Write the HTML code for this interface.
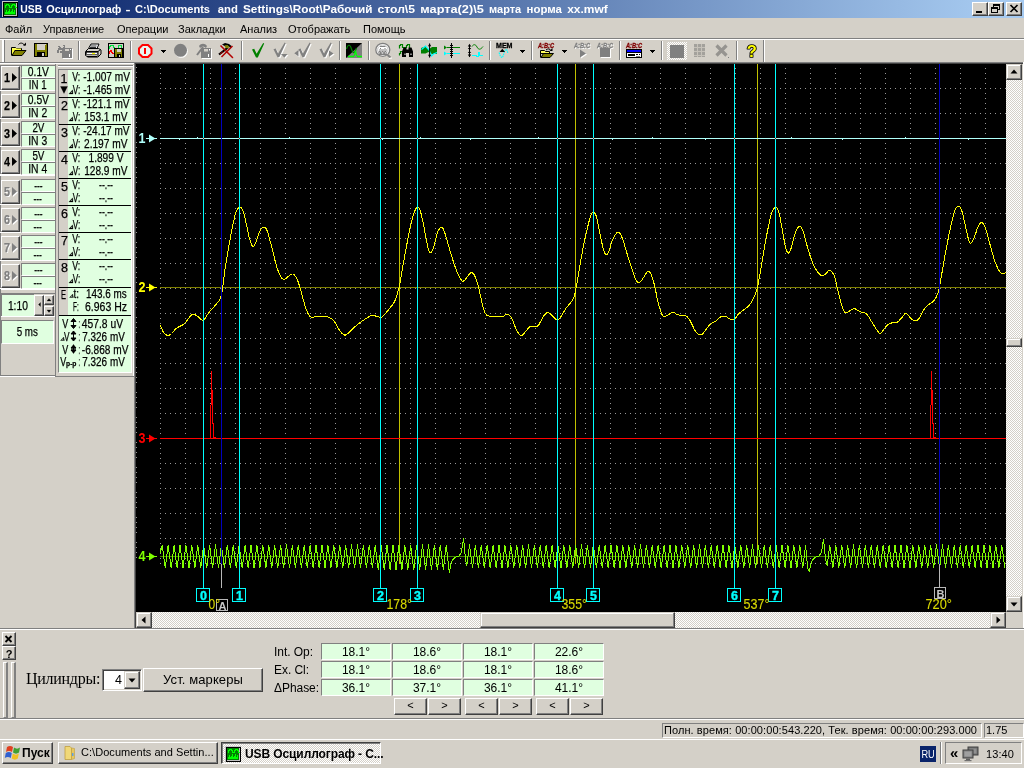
<!DOCTYPE html>
<html lang="ru">
<head>
<meta charset="utf-8">
<title>USB Осциллограф</title>
<style>
*{box-sizing:border-box;margin:0;padding:0}
html,body{width:1024px;height:768px;overflow:hidden;background:#d4d0c8}
body{position:relative;font-family:"Liberation Sans","DejaVu Sans",sans-serif;font-size:11px;color:#000}
.abs{position:absolute}
.t{position:absolute;white-space:nowrap;line-height:1}
.raised{position:absolute;background:#d4d0c8;border:1px solid;border-color:#fff #404040 #404040 #fff;box-shadow:inset -1px -1px 0 #808080, inset 1px 1px 0 #d4d0c8}
.raised2{position:absolute;background:#d4d0c8;border:1px solid;border-color:#d4d0c8 #404040 #404040 #d4d0c8;box-shadow:inset -1px -1px 0 #808080, inset 1px 1px 0 #fff}
.sunken{position:absolute;border:1px solid;border-color:#808080 #fff #fff #808080}
.sunken2{position:absolute;border:1px solid;border-color:#808080 #fff #fff #808080;box-shadow:inset 1px 1px 0 #404040, inset -1px -1px 0 #d4d0c8}
.gf{position:absolute;background:#e0ffe0;border:1px solid;border-color:#808080 #fff #fff #808080;text-align:center;white-space:nowrap;overflow:hidden}
.chk{background-color:#eae8e4;background-image:repeating-conic-gradient(#fff 0 25%,#d4d0c8 0 50%);background-size:2px 2px}
.sep{position:absolute;width:2px;border-left:1px solid #808080;border-right:1px solid #fff}
svg{position:absolute;overflow:visible;will-change:transform}
.t,.gf{will-change:transform}
</style>
</head>
<body>
<!-- title bar -->
<div class="abs" style="left:0;top:0;width:1024px;height:18px;background:linear-gradient(90deg,#0a246a 0%,#0a246a 2%,#a6caf0 97%,#a6caf0 100%)"></div>
<svg style="left:2px;top:1px" width="16" height="16" viewBox="0 0 16 16" shape-rendering="crispEdges">
 <rect x="0" y="0" width="16" height="16" fill="#c8c8c8"/><rect x="1" y="1" width="15" height="15" fill="#000"/>
 <rect x="2" y="2" width="13" height="13" fill="#c0c0c0"/><rect x="2" y="2" width="12" height="12" fill="#008000"/>
 <path d="M2.500 6.500h1v-2h1v-1h2v1h1v2h2v-2h1v-1h2v1h1v2h1" fill="none" stroke="#00ff00"/><path d="M3 13V11h1V9h1v2h1V10h1V8h1v3h1V10h1V8h1v3h1V9h1v4z" fill="#00ff00"/>
</svg>
<svg style="left:0;top:0" width="640" height="18" viewBox="0 0 640 18" font-family="Liberation Sans,sans-serif" font-size="11.500" font-weight="bold" fill="#fff"><text x="20.3" y="13" textLength="21.9" lengthAdjust="spacingAndGlyphs">USB</text><text x="46.3" y="13" textLength="75" lengthAdjust="spacingAndGlyphs">Осциллограф</text><text x="125.6" y="13" textLength="5" lengthAdjust="spacingAndGlyphs">-</text><text x="135" y="13" textLength="75" lengthAdjust="spacingAndGlyphs">C:\Documents</text><text x="217.8" y="13" textLength="20.2" lengthAdjust="spacingAndGlyphs">and</text><text x="243" y="13" textLength="129.5" lengthAdjust="spacingAndGlyphs">Settings\Root\Рабочий</text><text x="377.5" y="13" textLength="37.5" lengthAdjust="spacingAndGlyphs">стол\5</text><text x="420.3" y="13" textLength="63.5" lengthAdjust="spacingAndGlyphs">марта(2)\5</text><text x="489" y="13" textLength="32.25" lengthAdjust="spacingAndGlyphs">марта</text><text x="526.5" y="13" textLength="35.4" lengthAdjust="spacingAndGlyphs">норма</text><text x="567.2" y="13" textLength="40.6" lengthAdjust="spacingAndGlyphs">хх.mwf</text></svg>
<div class="raised" style="left:972px;top:2px;width:16px;height:14px"></div>
<div class="abs" style="left:976px;top:11px;width:6px;height:2px;background:#000"></div>
<div class="raised" style="left:988px;top:2px;width:16px;height:14px"></div>
<svg style="left:991px;top:4px" width="10" height="10" viewBox="0 0 10 10" shape-rendering="crispEdges"><path d="M2.5 2.5V1h6v4.5H7" fill="none" stroke="#000" stroke-width="1"/><rect x="2" y="0" width="7" height="2" fill="#000"/><rect x="0.5" y="4.500" width="6" height="4" fill="none" stroke="#000"/><rect x="0" y="3" width="7" height="2" fill="#000"/></svg>
<div class="raised" style="left:1006px;top:2px;width:16px;height:14px"></div>
<svg style="left:1010px;top:5px" width="8" height="7" viewBox="0 0 8 7"><path d="M0.5 0L7.500 7M7.500 0L0.500 7" stroke="#000" stroke-width="1.700"/></svg>
<!-- menu -->
<div class="t" style="left:5px;top:24px">Файл</div>
<div class="t" style="left:43px;top:24px">Управление</div>
<div class="t" style="left:117px;top:24px">Операции</div>
<div class="t" style="left:178px;top:24px">Закладки</div>
<div class="t" style="left:240px;top:24px">Анализ</div>
<div class="t" style="left:288px;top:24px">Отображать</div>
<div class="t" style="left:363px;top:24px">Помощь</div>
<!-- toolbar frame -->
<div class="abs" style="left:0;top:38px;width:1024px;height:1px;background:#808080"></div>
<div class="abs" style="left:0;top:39px;width:1024px;height:1px;background:#fff"></div>
<div class="abs" style="left:2px;top:40px;width:3px;height:22px;border-left:2px solid #fff;border-right:1px solid #808080"></div>
<!-- toolbar icons -->
<svg style="left:0;top:38px" width="1024" height="26" viewBox="0 38 1024 26">
<g shape-rendering="crispEdges">
 <!-- separators -->
 <g fill="#808080"><rect x="78" y="41" width="1" height="19"/><rect x="130" y="41" width="1" height="19"/><rect x="241" y="41" width="1" height="19"/><rect x="339" y="41" width="1" height="19"/><rect x="368" y="41" width="1" height="19"/><rect x="489" y="41" width="1" height="19"/><rect x="531" y="41" width="1" height="19"/><rect x="619" y="41" width="1" height="19"/><rect x="661" y="41" width="1" height="19"/><rect x="736" y="41" width="1" height="19"/><rect x="763" y="40" width="1" height="22"/></g>
 <g fill="#ffffff"><rect x="79" y="41" width="1" height="19"/><rect x="131" y="41" width="1" height="19"/><rect x="242" y="41" width="1" height="19"/><rect x="340" y="41" width="1" height="19"/><rect x="369" y="41" width="1" height="19"/><rect x="490" y="41" width="1" height="19"/><rect x="532" y="41" width="1" height="19"/><rect x="620" y="41" width="1" height="19"/><rect x="662" y="41" width="1" height="19"/><rect x="737" y="41" width="1" height="19"/><rect x="764" y="40" width="1" height="22"/></g>
 <!-- dropdown arrows -->
 <g fill="#000"><path d="M161 50h5l-2.500 3z"/><path d="M520 50h5l-2.500 3z"/><path d="M562 50h5l-2.500 3z"/><path d="M650 50h5l-2.500 3z"/></g>
</g>
<!-- open -->
<g transform="translate(11,42)">
 <path d="M7.500 2.500C9 0.500 12 0.500 13.500 3.500" fill="none" stroke="#000" stroke-width="1"/><path d="M12 3.500h3v-3z" fill="#000"/>
 <path d="M0.500 5.500h4l1 1h5v2h-10z" fill="#ffff80" stroke="#000"/><path d="M0.500 6v7.500" stroke="#000"/>
 <path d="M1 6.500h9v2h-6.500l-2.500 4.500z" fill="#ffff40"/>
 <path d="M1 13.500l3-5h11l-4 5z" fill="#808000" stroke="#000" stroke-linejoin="miter"/>
</g>
<!-- save -->
<g transform="translate(34,43)" shape-rendering="crispEdges">
 <rect x="0" y="0" width="14" height="14" fill="#000"/><rect x="1" y="1" width="12" height="12" fill="#808000"/>
 <rect x="3" y="1" width="8" height="6" fill="#d4d0c8"/><rect x="11" y="1" width="1" height="1" fill="#d4d0c8"/>
 <rect x="3" y="9" width="8" height="4" fill="#000"/><rect x="8" y="10" width="2" height="3" fill="#d4d0c8"/>
</g>
<!-- gray saveas -->
<g transform="translate(57,45)" shape-rendering="crispEdges">
 <rect x="6" y="4" width="10" height="10" fill="#fff"/><rect x="5" y="3" width="10" height="10" fill="#808080"/>
 <rect x="8" y="4" width="4" height="2" fill="#d4d0c8"/><rect x="12" y="9" width="1" height="3" fill="#fff"/><rect x="13" y="4" width="1" height="1" fill="#fff"/>
 <path d="M1 1h1v1h1v1h3v-1h1v-1h1M6 0h1v3" fill="none" stroke="#808080"/><rect x="1" y="3" width="4" height="2" fill="#808080"/><rect x="0" y="5" width="2" height="3" fill="#808080"/><rect x="3" y="6" width="2" height="2" fill="#808080"/>
</g>
<!-- printer -->
<g transform="translate(85,43)">
 <path d="M3.500 5.500l2.500-4.500h8l-2 4.500" fill="#fff" stroke="#000"/><path d="M5.500 3h6M5 4.500h6" stroke="#000" stroke-width="0.800"/>
 <path d="M0.500 8.500l3-3h10l2.500 1.500v4l-3 3h-10l-2.500-1.500z" fill="#d4d0c8" stroke="#000"/>
 <path d="M1 8.500h12l2.500-2M13 8.500v5" fill="none" stroke="#000"/>
 <rect x="1.500" y="9.500" width="11" height="2" fill="#fff" stroke="#000" stroke-width="0.600"/><rect x="7" y="10" width="3" height="1.200" fill="#ffff00"/>
 <path d="M2 13.500h10" stroke="#000" stroke-width="1.200"/>
</g>
<!-- graph save -->
<g transform="translate(108,43)" shape-rendering="crispEdges">
 <rect x="0.500" y="0.500" width="15" height="14" fill="#d4d0c8" stroke="#000"/>
 <path d="M1.500 5.500v-2h1v-1h3v2h1M10.500 4.500v-2h3v2" fill="none" stroke="#00e040"/>
 <path d="M1.500 10.500v-2h1v-1h1v2h1v1h1" fill="none" stroke="#ff0000"/>
 <rect x="6" y="5" width="9" height="10" fill="#000"/><rect x="7" y="6" width="7" height="8" fill="#808000"/>
 <rect x="9" y="6" width="4" height="3" fill="#d4d0c8"/><rect x="9" y="11" width="4" height="3" fill="#000"/><rect x="11" y="12" width="1" height="2" fill="#d4d0c8"/>
</g>
<!-- stop -->
<g transform="translate(138,44)">
 <path d="M4.500 1h5.500l3.500 3.500v5l-3.500 3.500h-5.500l-3.500-3.500v-5z" fill="#e8f4f0" stroke="#ff0000" stroke-width="2"/>
 <rect x="6" y="4" width="2" height="6" fill="#ff0000"/>
</g>
<!-- gray circle -->
<circle cx="181.300" cy="51.300" r="6.500" fill="#fff"/><circle cx="180.500" cy="50.300" r="6.500" fill="#808080"/>
<!-- gray hammer floppy -->
<g transform="translate(196,43)">
 <rect x="6" y="6" width="10" height="10" fill="#fff"/><rect x="5" y="5" width="10" height="10" fill="#808080"/>
 <rect x="8" y="6" width="4" height="2.500" fill="#d4d0c8"/><rect x="12" y="11" width="1" height="3" fill="#fff"/><rect x="13" y="6" width="1" height="1.500" fill="#fff"/>
 <path d="M1 12l6-8" stroke="#808080" stroke-width="2"/><path d="M3 3c2-3 6-3 8 0l-1 2c-2-2-4-2-6 0z" fill="#808080"/>
</g>
<!-- hammer red X -->
<g transform="translate(218,43)">
 <path d="M1 11.500l9-7" stroke="#000" stroke-width="2.200"/><path d="M2 11l3-2.300" stroke="#800000" stroke-width="1.200"/>
 <path d="M4 1.500l3-1.500 4 1 2.500 2-1 2-3-2.500-3 0.500z" fill="#000"/><path d="M6.500 2.500l3-0.500 2 2-2 1.500-2.500-1z" fill="#808000"/>
 <path d="M2.500 2.500l12 12M14.500 3l-11 11" stroke="#b00000" stroke-width="1.500"/>
 <rect x="14" y="14" width="1.200" height="1.200" fill="#c00000"/>
</g>
<!-- checks -->
<path d="M252.0 49.6 L254.2 48.8 L256.6 53.8 L263.2 43.0 L264.2 43.6 L257.8 57.6 L256.0 57.6z" fill="#008000"/>
<path d="M274.5 50.2 L276.7 49.4 L279.1 54.4 L285.7 43.6 L286.7 44.2 L280.3 58.2 L278.5 58.2z" fill="#fff"/><path d="M273.5 49.2 L275.7 48.4 L278.1 53.4 L284.7 42.6 L285.7 43.2 L279.3 57.2 L277.5 57.2z" fill="#808080"/><path d="M282 55h6.500l-3.200 3.800z" fill="#fff"/><path d="M281 54h6.500l-3.200 3.800z" fill="#808080"/>
<path d="M299.4 50.2 L301.6 49.4 L304.0 54.4 L310.6 43.6 L311.6 44.2 L305.2 58.2 L303.4 58.2z" fill="#fff"/><path d="M298.4 49.2 L300.6 48.4 L303.0 53.4 L309.6 42.6 L310.6 43.2 L304.2 57.2 L302.4 57.2z" fill="#808080"/><path d="M299.500 51v6.400l-4.200-3.200z" fill="#fff"/><path d="M298.500 50v6.400l-4.200-3.200z" fill="#808080"/>
<path d="M320.5 50.2 L322.7 49.4 L325.1 54.4 L331.7 43.6 L332.7 44.2 L326.3 58.2 L324.5 58.2z" fill="#fff"/><path d="M319.5 49.2 L321.7 48.4 L324.1 53.4 L330.7 42.6 L331.7 43.2 L325.3 57.2 L323.5 57.2z" fill="#808080"/><path d="M330 51.400v6.400l4.600-3.200z" fill="#fff"/><path d="M329 50.400v6.400l4.600-3.200z" fill="#808080"/>
<!-- black/gray square -->
<g transform="translate(346,43)">
 <rect x="0" y="0" width="16" height="15" fill="#808080" shape-rendering="crispEdges"/><path d="M0 0h16l-16 15z" fill="#000"/>
 <path d="M0.500 6c1.500-5 3.500-5 5 0s3 5 5-1" fill="none" stroke="#008000" stroke-width="1.200"/>
 <path d="M2 13.500h5.500c1.500-1 1.500-3 2-6c0.500 3 0.500 5 2 6h4.500" fill="none" stroke="#00ff00" stroke-width="1.300"/>
</g>
<!-- magnifier -->
<g transform="translate(375,43)">
 <ellipse cx="7.800" cy="6.800" rx="7" ry="6.500" fill="#fff" stroke="#808080" stroke-width="1.300"/><ellipse cx="7.800" cy="6.800" rx="5.200" ry="4.700" fill="none" stroke="#c0c0c0" stroke-width="0.900"/>
 <path d="M4 11v-2.500h1.500v2.500h1.300v-2.500h1.500v2.500h1.300v-2.500h1.500v2.500M3.500 11.500h9M5 3.500h5.500M5 5.500h1M9.500 5.500h1M4 7h8" fill="none" stroke="#808080" stroke-width="1"/>
 <path d="M12.500 12l3 2.500" stroke="#808080" stroke-width="2"/><path d="M14 15.500l3-0.500" stroke="#fff"/>
</g>
<!-- binoculars -->
<g transform="translate(399,44)">
 <path d="M0.500 4.500v-3h1v-1h2v3h4v-2h1v-1h2v4M0.500 11.500v-2h1v-2h2v3" fill="none" stroke="#008000" stroke-width="1.200"/>
 <path d="M4.500 3.500h3v2h2v-2h3l1.500 4v5.500h-4v-4h-3v4h-4v-5.500z" fill="#000"/>
 <rect x="5.500" y="9.500" width="1" height="1.500" fill="#fff"/><rect x="11.500" y="9.500" width="1" height="1.500" fill="#fff"/><rect x="5" y="12" width="2" height="1" fill="#000"/>
</g>
<!-- green wave arrows -->
<g transform="translate(421,43)">
 <path d="M0 5l4-1.500 3.500 3 3.500-2.500h5v7h-5l-3.500-2-3 1.500h-4.500z" fill="#008000"/>
 <path d="M0.500 6.500l4-3.500 3.500 4 2.500 6 2-2 3.500-1.500" fill="none" stroke="#00ffff" stroke-width="1.200"/>
 <path d="M8.600 0.500v14" stroke="#000" stroke-width="1"/><path d="M7 3.200l1.600-2.700 1.600 2.700zM7 11.800l1.600 2.700 1.600-2.700z" fill="#000"/>
</g>
<!-- two lines w arrow -->
<g transform="translate(444,43)" shape-rendering="crispEdges">
 <rect x="3" y="4" width="13" height="1" fill="#008000"/><path d="M0 2.500l3 2-3 2z" fill="#008000" shape-rendering="auto"/>
 <rect x="3" y="10" width="13" height="1" fill="#00ffff"/><path d="M0 8.500l3 2-3 2z" fill="#00ffff" shape-rendering="auto"/>
 <rect x="7" y="0" width="1" height="15" fill="#000"/><rect x="6" y="2" width="3" height="1" fill="#000"/><rect x="6" y="4" width="3" height="1" fill="#000"/><rect x="6" y="6" width="3" height="1" fill="#000"/><rect x="6" y="8" width="3" height="1" fill="#000"/><rect x="6" y="10" width="3" height="1" fill="#000"/><rect x="6" y="12" width="3" height="1" fill="#000"/>
</g>
<!-- arrows + waves -->
<g transform="translate(467,43)">
 <path d="M2.500 1.500v12" stroke="#000" stroke-width="1" shape-rendering="crispEdges"/><path d="M0.800 3.500l1.700-2.800 1.700 2.800zM0.800 5l1.700 2 1.700-2zM0.800 10l1.700-2 1.700 2zM0.800 11.500l1.700 2.800 1.700-2.800z" fill="#000"/>
 <path d="M5 3.500c1.500-2.500 3.500-2.500 5 0.500s3.500 3 6-0.500" fill="none" stroke="#008000" stroke-width="1"/>
 <path d="M5 12.500h4v1h2v-4h1v2.500h4" fill="none" stroke="#00ffff" stroke-width="1" shape-rendering="crispEdges"/>
</g>
<!-- MEM -->
<text x="496" y="48" font-family="Liberation Sans,sans-serif" font-size="7.500" font-weight="bold" fill="#000" stroke="#000" stroke-width="0.300" textLength="16.500" lengthAdjust="spacingAndGlyphs">MEM</text>
<path d="M499 52.500c1 3 2 5 3 5s2-5 3-7 2-1 3 3" fill="none" stroke="#00ffff" stroke-width="1.100" stroke-dasharray="1.500 0.700"/>
<path d="M499.500 52l2.800-3.200 2.800 3.200z" fill="#000"/>
<!-- A:B:C folder -->
<text x="538" y="48" font-family="Liberation Sans,sans-serif" font-size="7" font-weight="bold" font-style="italic" fill="#800000" stroke="#800000" stroke-width="0.350" textLength="16" lengthAdjust="spacingAndGlyphs">A:B:C</text>
<g transform="translate(540,48)">
 <path d="M6 2c1.500-1.500 4-1.500 5 0.500" fill="none" stroke="#000"/><path d="M9.500 3h3v-3z" fill="#000"/>
 <path d="M0.500 2.500h4l1 1h4v2h-9z" fill="#ffff60" stroke="#000"/><path d="M0.500 3v6.500" stroke="#000"/>
 <path d="M1 9.500l2.500-4h10l-3.500 4z" fill="#808000" stroke="#000"/>
</g>
<!-- gray A:B:C play -->
<text x="575" y="49" font-family="Liberation Sans,sans-serif" font-size="7" font-weight="bold" font-style="italic" fill="#fff" textLength="16" lengthAdjust="spacingAndGlyphs">A:B:C</text>
<text x="574" y="48" font-family="Liberation Sans,sans-serif" font-size="7" font-weight="bold" font-style="italic" fill="#808080" stroke="#808080" stroke-width="0.300" textLength="16" lengthAdjust="spacingAndGlyphs">A:B:C</text>
<path d="M581 50.500v8l6-4z" fill="#fff"/><path d="M580 49.500v8l6-4z" fill="#808080"/>
<text x="598" y="49" font-family="Liberation Sans,sans-serif" font-size="7" font-weight="bold" font-style="italic" fill="#fff" textLength="16" lengthAdjust="spacingAndGlyphs">A:B:C</text>
<text x="597" y="48" font-family="Liberation Sans,sans-serif" font-size="7" font-weight="bold" font-style="italic" fill="#808080" stroke="#808080" stroke-width="0.300" textLength="16" lengthAdjust="spacingAndGlyphs">A:B:C</text>
<rect x="601" y="49" width="10" height="9" fill="#fff"/><rect x="600" y="48" width="10" height="9" fill="#808080"/>
<!-- A:B:C device -->
<text x="626" y="48" font-family="Liberation Sans,sans-serif" font-size="7" font-weight="bold" font-style="italic" fill="#800000" stroke="#800000" stroke-width="0.350" textLength="16" lengthAdjust="spacingAndGlyphs">A:B:C</text>
<g shape-rendering="crispEdges"><rect x="626" y="49" width="16" height="9" fill="#000"/><rect x="627" y="50" width="14" height="2" fill="#0000ff"/><rect x="627" y="53" width="14" height="4" fill="#fff"/><rect x="628" y="54" width="7" height="2" fill="#000"/><rect x="636" y="54" width="2" height="1" fill="#000"/><rect x="639" y="54" width="1" height="1" fill="#000"/><rect x="636" y="56" width="4" height="1" fill="#808080"/></g>
<!-- pressed gray square -->
<defs><pattern id="dth" width="2" height="2" patternUnits="userSpaceOnUse"><rect width="2" height="2" fill="#d4d0c8"/><rect width="1" height="1" fill="#fff"/><rect x="1" y="1" width="1" height="1" fill="#fff"/></pattern>
<pattern id="dtg" width="2" height="2" patternUnits="userSpaceOnUse"><rect width="1" height="1" fill="#808080"/><rect x="1" y="1" width="1" height="1" fill="#808080"/></pattern></defs>
<g shape-rendering="crispEdges"><rect x="667" y="42" width="20" height="18" fill="url(#dth)"/><rect x="670" y="45" width="14" height="13" fill="#808080"/></g>
<!-- gray dotted -->
<g shape-rendering="crispEdges"><rect x="694" y="44" width="11" height="13" fill="#a3a19c"/><path d="M694 47.500h11M694 51.500h11M694 55.500h11" stroke="#c6c2ba" stroke-width="1"/><path d="M697.500 44v13M701.500 44v13" stroke="#c6c2ba" stroke-width="1"/></g>
<!-- gray X -->
<path d="M716.500 45.500l10 10M726.500 45.500l-10 10" stroke="#969490" stroke-width="3.200"/><rect x="728" y="57" width="1" height="1" fill="#808080"/>
<!-- question -->
<text x="746.800" y="56.500" font-family="Liberation Sans,sans-serif" font-size="16.500" font-weight="bold" fill="#ffff00" stroke="#000" stroke-width="1.700" paint-order="stroke" stroke-linejoin="round">?</text>
</svg>
<!-- left panel -->
<div class="abs" style="left:0;top:62px;width:136px;height:1px;background:#808080"></div>
<div class="abs" style="left:0;top:63px;width:134px;height:1px;background:#fff"></div>
<div class="abs" style="left:0;top:375px;width:56px;height:1px;background:#808080"></div>
<div class="abs" style="left:0;top:376px;width:55px;height:1px;background:#fff"></div>
<div class="abs" style="left:55px;top:376px;width:79px;height:1px;background:#808080"></div>
<div class="abs" style="left:55px;top:64px;width:1px;height:312px;background:#808080"></div>
<div class="abs" style="left:58px;top:65px;width:75px;height:1px;background:#808080"></div>
<div class="abs" style="left:58px;top:66px;width:76px;height:1px;background:#fff"></div>
<div class="abs" style="left:133px;top:65px;width:1px;height:311px;background:#fff"></div>
<div class="abs" style="left:0;top:65px;width:56px;height:1px;background:#808080"></div>
<div class="abs" style="left:0;top:65px;width:1px;height:311px;background:#808080"></div>
<div class="raised" style="left:1px;top:66px;width:19px;height:24px"></div>
<div class="gf" style="left:21px;top:65px;width:34px;height:13px;border-right:0"></div>
<div class="gf" style="left:21px;top:78px;width:34px;height:13px;border-right:0"></div>
<div class="abs" style="left:0;top:90px;width:21px;height:1px;background:#fff"></div>
<div class="raised" style="left:1px;top:94px;width:19px;height:24px"></div>
<div class="gf" style="left:21px;top:93px;width:34px;height:13px;border-right:0"></div>
<div class="gf" style="left:21px;top:106px;width:34px;height:13px;border-right:0"></div>
<div class="abs" style="left:0;top:118px;width:21px;height:1px;background:#fff"></div>
<div class="raised" style="left:1px;top:122px;width:19px;height:24px"></div>
<div class="gf" style="left:21px;top:121px;width:34px;height:13px;border-right:0"></div>
<div class="gf" style="left:21px;top:134px;width:34px;height:13px;border-right:0"></div>
<div class="abs" style="left:0;top:146px;width:21px;height:1px;background:#fff"></div>
<div class="raised" style="left:1px;top:150px;width:19px;height:24px"></div>
<div class="gf" style="left:21px;top:149px;width:34px;height:13px;border-right:0"></div>
<div class="gf" style="left:21px;top:162px;width:34px;height:13px;border-right:0"></div>
<div class="abs" style="left:0;top:174px;width:21px;height:1px;background:#fff"></div>
<div class="raised" style="left:1px;top:180px;width:19px;height:24px"></div>
<div class="gf" style="left:21px;top:179px;width:34px;height:13px;border-right:0"></div>
<div class="gf" style="left:21px;top:192px;width:34px;height:13px;border-right:0"></div>
<div class="abs" style="left:0;top:204px;width:21px;height:1px;background:#fff"></div>
<div class="raised" style="left:1px;top:208px;width:19px;height:24px"></div>
<div class="gf" style="left:21px;top:207px;width:34px;height:13px;border-right:0"></div>
<div class="gf" style="left:21px;top:220px;width:34px;height:13px;border-right:0"></div>
<div class="abs" style="left:0;top:232px;width:21px;height:1px;background:#fff"></div>
<div class="raised" style="left:1px;top:236px;width:19px;height:24px"></div>
<div class="gf" style="left:21px;top:235px;width:34px;height:13px;border-right:0"></div>
<div class="gf" style="left:21px;top:248px;width:34px;height:13px;border-right:0"></div>
<div class="abs" style="left:0;top:260px;width:21px;height:1px;background:#fff"></div>
<div class="raised" style="left:1px;top:264px;width:19px;height:24px"></div>
<div class="gf" style="left:21px;top:263px;width:34px;height:13px;border-right:0"></div>
<div class="gf" style="left:21px;top:276px;width:34px;height:13px;border-right:0"></div>
<div class="abs" style="left:0;top:288px;width:21px;height:1px;background:#fff"></div>
<div class="abs" style="left:0;top:175px;width:55px;height:1px;background:#fff"></div>
<div class="abs" style="left:1px;top:289px;width:54px;height:1px;background:#fff"></div>
<div class="abs" style="left:1px;top:293px;width:54px;height:1px;background:#808080"></div>
<div class="gf" style="left:1px;top:294px;width:33px;height:23px;border-right:0"></div>
<div class="raised" style="left:34px;top:295px;width:10px;height:21px"></div>
<div class="raised" style="left:44px;top:295px;width:10px;height:10px"></div>
<div class="raised" style="left:44px;top:306px;width:10px;height:10px"></div>
<div class="abs" style="left:1px;top:316px;width:54px;height:1px;background:#fff"></div>
<div class="gf" style="left:1px;top:320px;width:53px;height:24px"></div>
<div class="abs" style="left:58px;top:69px;width:74px;height:304px;background:#e0ffe0;border:1px solid;border-color:#808080 #fff #fff #808080"></div>
<div class="abs" style="left:59px;top:70px;width:9px;height:246px;background:#d4d0c8"></div>
<div class="abs" style="left:59px;top:97px;width:72px;height:1px;background:#000"></div>
<div class="abs" style="left:59px;top:124px;width:72px;height:1px;background:#000"></div>
<div class="abs" style="left:59px;top:151px;width:72px;height:1px;background:#000"></div>
<div class="abs" style="left:59px;top:178px;width:72px;height:1px;background:#000"></div>
<div class="abs" style="left:59px;top:205px;width:72px;height:1px;background:#000"></div>
<div class="abs" style="left:59px;top:232px;width:72px;height:1px;background:#000"></div>
<div class="abs" style="left:59px;top:259px;width:72px;height:1px;background:#000"></div>
<div class="abs" style="left:59px;top:287px;width:72px;height:1px;background:#000"></div>
<div class="abs" style="left:59px;top:315px;width:72px;height:1px;background:#000"></div>
<svg style="left:0;top:0" width="136" height="380" viewBox="0 0 136 380" font-family="Liberation Sans,sans-serif" fill="#000" stroke="#000" stroke-width="0.250">
<text x="4" y="82"  font-size="13" font-weight="bold" fill="#000" stroke="#000" textLength="6" lengthAdjust="spacingAndGlyphs">1</text>
<path d="M12 73v9l5-4.500z" fill="#000" stroke="none"/>
<text x="4" y="110"  font-size="13" font-weight="bold" fill="#000" stroke="#000" textLength="6" lengthAdjust="spacingAndGlyphs">2</text>
<path d="M12 101v9l5-4.500z" fill="#000" stroke="none"/>
<text x="4" y="138"  font-size="13" font-weight="bold" fill="#000" stroke="#000" textLength="6" lengthAdjust="spacingAndGlyphs">3</text>
<path d="M12 129v9l5-4.500z" fill="#000" stroke="none"/>
<text x="4" y="166"  font-size="13" font-weight="bold" fill="#000" stroke="#000" textLength="6" lengthAdjust="spacingAndGlyphs">4</text>
<path d="M12 157v9l5-4.500z" fill="#000" stroke="none"/>
<text x="5" y="197"  font-size="13" font-weight="bold" fill="#fff" stroke="none" textLength="6" lengthAdjust="spacingAndGlyphs">5</text>
<path d="M13 188v9l5-4.500z" fill="#fff" stroke="none"/>
<text x="4" y="196"  font-size="13" font-weight="bold" fill="#808080" stroke="#808080" textLength="6" lengthAdjust="spacingAndGlyphs">5</text>
<path d="M12 187v9l5-4.500z" fill="#808080" stroke="none"/>
<text x="5" y="225"  font-size="13" font-weight="bold" fill="#fff" stroke="none" textLength="6" lengthAdjust="spacingAndGlyphs">6</text>
<path d="M13 216v9l5-4.500z" fill="#fff" stroke="none"/>
<text x="4" y="224"  font-size="13" font-weight="bold" fill="#808080" stroke="#808080" textLength="6" lengthAdjust="spacingAndGlyphs">6</text>
<path d="M12 215v9l5-4.500z" fill="#808080" stroke="none"/>
<text x="5" y="253"  font-size="13" font-weight="bold" fill="#fff" stroke="none" textLength="6" lengthAdjust="spacingAndGlyphs">7</text>
<path d="M13 244v9l5-4.500z" fill="#fff" stroke="none"/>
<text x="4" y="252"  font-size="13" font-weight="bold" fill="#808080" stroke="#808080" textLength="6" lengthAdjust="spacingAndGlyphs">7</text>
<path d="M12 243v9l5-4.500z" fill="#808080" stroke="none"/>
<text x="5" y="281"  font-size="13" font-weight="bold" fill="#fff" stroke="none" textLength="6" lengthAdjust="spacingAndGlyphs">8</text>
<path d="M13 272v9l5-4.500z" fill="#fff" stroke="none"/>
<text x="4" y="280"  font-size="13" font-weight="bold" fill="#808080" stroke="#808080" textLength="6" lengthAdjust="spacingAndGlyphs">8</text>
<path d="M12 271v9l5-4.500z" fill="#808080" stroke="none"/>
<text x="27.799999999999997" y="76" font-size="12.5" textLength="21.2" lengthAdjust="spacingAndGlyphs">0.1V</text>
<text x="28.800000000000004" y="89" font-size="12.5" textLength="17.8" lengthAdjust="spacingAndGlyphs">IN 1</text>
<text x="27.799999999999997" y="104" font-size="12.5" textLength="21.2" lengthAdjust="spacingAndGlyphs">0.5V</text>
<text x="28.200000000000003" y="117" font-size="12.5" textLength="19" lengthAdjust="spacingAndGlyphs">IN 2</text>
<text x="32.4" y="132" font-size="12.5" textLength="12" lengthAdjust="spacingAndGlyphs">2V</text>
<text x="28.200000000000003" y="145" font-size="12.5" textLength="19" lengthAdjust="spacingAndGlyphs">IN 3</text>
<text x="32.4" y="160" font-size="12.5" textLength="12" lengthAdjust="spacingAndGlyphs">5V</text>
<text x="28.200000000000003" y="173" font-size="12.5" textLength="19" lengthAdjust="spacingAndGlyphs">IN 4</text>
<text x="34.15" y="190" font-size="12.5" textLength="8.5" lengthAdjust="spacingAndGlyphs">---</text>
<text x="33.45" y="203" font-size="12.5" textLength="8.5" lengthAdjust="spacingAndGlyphs">---</text>
<text x="34.15" y="218" font-size="12.5" textLength="8.5" lengthAdjust="spacingAndGlyphs">---</text>
<text x="33.45" y="231" font-size="12.5" textLength="8.5" lengthAdjust="spacingAndGlyphs">---</text>
<text x="34.15" y="246" font-size="12.5" textLength="8.5" lengthAdjust="spacingAndGlyphs">---</text>
<text x="33.45" y="259" font-size="12.5" textLength="8.5" lengthAdjust="spacingAndGlyphs">---</text>
<text x="34.15" y="274" font-size="12.5" textLength="8.5" lengthAdjust="spacingAndGlyphs">---</text>
<text x="33.45" y="287" font-size="12.5" textLength="8.5" lengthAdjust="spacingAndGlyphs">---</text>
<text x="7.9" y="310" font-size="12.5" textLength="20" lengthAdjust="spacingAndGlyphs">1:10</text>
<text x="16.7" y="336" font-size="12.5" textLength="21.2" lengthAdjust="spacingAndGlyphs">5 ms</text>
<path d="M40.500 302.500l-2 2 2 2zM49 298.500l-2 2.500h4zM47 310h4l-2 2.500z" fill="#000"/>
<text x="60.5" y="83" font-size="12.5">1</text>
<text x="72.3" y="81" font-size="12.5" textLength="8" lengthAdjust="spacingAndGlyphs">V:</text>
<text x="72.8" y="94" font-size="12.5" textLength="7.5" lengthAdjust="spacingAndGlyphs">V:</text>
<path d="M68.800 94h4.200l-0.300-4.200zM70.600 93.1h1.500l-0.100-1.500z" fill-rule="evenodd"/>
<text x="83.2" y="81" font-size="12.5" textLength="46.8" lengthAdjust="spacingAndGlyphs">-1.007 mV</text>
<text x="83.2" y="94" font-size="12.5" textLength="46.8" lengthAdjust="spacingAndGlyphs">-1.465 mV</text>
<text x="61" y="110" font-size="12.5">2</text>
<text x="72.3" y="108" font-size="12.5" textLength="8" lengthAdjust="spacingAndGlyphs">V:</text>
<text x="72.8" y="121" font-size="12.5" textLength="7.5" lengthAdjust="spacingAndGlyphs">V:</text>
<path d="M68.800 121h4.200l-0.300-4.200zM70.600 120.1h1.500l-0.100-1.500z" fill-rule="evenodd"/>
<text x="83.2" y="108" font-size="12.5" textLength="46.3" lengthAdjust="spacingAndGlyphs">-121.1 mV</text>
<text x="84.2" y="121" font-size="12.5" textLength="43.3" lengthAdjust="spacingAndGlyphs">153.1 mV</text>
<text x="61" y="137" font-size="12.5">3</text>
<text x="72.3" y="135" font-size="12.5" textLength="8" lengthAdjust="spacingAndGlyphs">V:</text>
<text x="72.8" y="148" font-size="12.5" textLength="7.5" lengthAdjust="spacingAndGlyphs">V:</text>
<path d="M68.800 148h4.200l-0.300-4.200zM70.600 147.1h1.500l-0.100-1.500z" fill-rule="evenodd"/>
<text x="83.2" y="135" font-size="12.5" textLength="46.3" lengthAdjust="spacingAndGlyphs">-24.17 mV</text>
<text x="84" y="148" font-size="12.5" textLength="43.5" lengthAdjust="spacingAndGlyphs">2.197 mV</text>
<text x="61" y="164" font-size="12.5">4</text>
<text x="72.3" y="162" font-size="12.5" textLength="8" lengthAdjust="spacingAndGlyphs">V:</text>
<text x="72.8" y="175" font-size="12.5" textLength="7.5" lengthAdjust="spacingAndGlyphs">V:</text>
<path d="M68.800 175h4.200l-0.300-4.200zM70.600 174.1h1.500l-0.100-1.500z" fill-rule="evenodd"/>
<text x="88.5" y="162" font-size="12.5" textLength="35" lengthAdjust="spacingAndGlyphs">1.899 V</text>
<text x="84.2" y="175" font-size="12.5" textLength="43.3" lengthAdjust="spacingAndGlyphs">128.9 mV</text>
<text x="61" y="191" font-size="12.5">5</text>
<text x="72.3" y="189" font-size="12.5" textLength="8" lengthAdjust="spacingAndGlyphs">V:</text>
<text x="72.8" y="202" font-size="12.5" textLength="7.5" lengthAdjust="spacingAndGlyphs">V:</text>
<path d="M68.800 202h4.200l-0.300-4.200zM70.600 201.1h1.500l-0.100-1.500z" fill-rule="evenodd"/>
<text x="99" y="189" font-size="12.5" textLength="14" lengthAdjust="spacingAndGlyphs">--.--</text>
<text x="99" y="202" font-size="12.5" textLength="14" lengthAdjust="spacingAndGlyphs">--.--</text>
<text x="61" y="218" font-size="12.5">6</text>
<text x="72.3" y="216" font-size="12.5" textLength="8" lengthAdjust="spacingAndGlyphs">V:</text>
<text x="72.8" y="229" font-size="12.5" textLength="7.5" lengthAdjust="spacingAndGlyphs">V:</text>
<path d="M68.800 229h4.200l-0.300-4.200zM70.600 228.1h1.500l-0.100-1.500z" fill-rule="evenodd"/>
<text x="99" y="216" font-size="12.5" textLength="14" lengthAdjust="spacingAndGlyphs">--.--</text>
<text x="99" y="229" font-size="12.5" textLength="14" lengthAdjust="spacingAndGlyphs">--.--</text>
<text x="61" y="245" font-size="12.5">7</text>
<text x="72.3" y="243" font-size="12.5" textLength="8" lengthAdjust="spacingAndGlyphs">V:</text>
<text x="72.8" y="256" font-size="12.5" textLength="7.5" lengthAdjust="spacingAndGlyphs">V:</text>
<path d="M68.800 256h4.200l-0.300-4.200zM70.600 255.1h1.500l-0.100-1.500z" fill-rule="evenodd"/>
<text x="99" y="243" font-size="12.5" textLength="14" lengthAdjust="spacingAndGlyphs">--.--</text>
<text x="99" y="256" font-size="12.5" textLength="14" lengthAdjust="spacingAndGlyphs">--.--</text>
<text x="61" y="272" font-size="12.5">8</text>
<text x="72.3" y="270" font-size="12.5" textLength="8" lengthAdjust="spacingAndGlyphs">V:</text>
<text x="72.8" y="283" font-size="12.5" textLength="7.5" lengthAdjust="spacingAndGlyphs">V:</text>
<path d="M68.800 283h4.200l-0.300-4.200zM70.600 282.1h1.500l-0.100-1.500z" fill-rule="evenodd"/>
<text x="99" y="270" font-size="12.5" textLength="14" lengthAdjust="spacingAndGlyphs">--.--</text>
<text x="99" y="283" font-size="12.5" textLength="14" lengthAdjust="spacingAndGlyphs">--.--</text>
<path d="M60.500 86.500h7l-3.500 7z"/>
<text x="61" y="299" font-size="12.5" textLength="5" lengthAdjust="spacingAndGlyphs">E</text>
<path d="M69.500 297.500h4l-0.800-3.500zM70.500 296.700h2l-0.400-1.600z" fill-rule="evenodd"/>
<text x="73.5" y="297.5" font-size="12.5" textLength="5.5" lengthAdjust="spacingAndGlyphs">t:</text>
<text x="85.9" y="297.5" font-size="12.5" textLength="40.7" lengthAdjust="spacingAndGlyphs">143.6 ms</text>
<text x="73.1" y="311" font-size="12.5" textLength="5.7" lengthAdjust="spacingAndGlyphs">F:</text>
<text x="85" y="311" font-size="12.5" textLength="42" lengthAdjust="spacingAndGlyphs">6.963 Hz</text>
<text x="62.3" y="328" font-size="12.5" textLength="6" lengthAdjust="spacingAndGlyphs">V</text>
<text x="78.5" y="328" font-size="12.5" textLength="1.5" lengthAdjust="spacingAndGlyphs">:</text>
<text x="81.8" y="328" font-size="12.5" textLength="41.2" lengthAdjust="spacingAndGlyphs">457.8 uV</text>
<text x="64" y="340.5" font-size="12.5" textLength="5.5" lengthAdjust="spacingAndGlyphs">V</text>
<text x="78.5" y="340.5" font-size="12.5" textLength="1.5" lengthAdjust="spacingAndGlyphs">:</text>
<text x="82.3" y="340.5" font-size="12.5" textLength="42.5" lengthAdjust="spacingAndGlyphs">7.326 mV</text>
<path d="M60.500 340.500h4l-0.800-3.500zM61.500 339.700h2l-0.400-1.600z" fill-rule="evenodd"/>
<text x="62.3" y="353.5" font-size="12.5" textLength="6" lengthAdjust="spacingAndGlyphs">V</text>
<text x="78.5" y="353.5" font-size="12.5" textLength="1.5" lengthAdjust="spacingAndGlyphs">:</text>
<text x="81.8" y="353.5" font-size="12.5" textLength="46.6" lengthAdjust="spacingAndGlyphs">-6.868 mV</text>
<text x="60.2" y="366" font-size="12.5" textLength="6" lengthAdjust="spacingAndGlyphs">V</text>
<text x="66" y="366" font-size="8" textLength="10.5" lengthAdjust="spacingAndGlyphs" font-weight="bold">p-p</text>
<text x="78.5" y="366" font-size="12.5" textLength="1.5" lengthAdjust="spacingAndGlyphs">:</text>
<text x="82.3" y="366" font-size="12.5" textLength="42.5" lengthAdjust="spacingAndGlyphs">7.326 mV</text>
<path d="M73.500 319v9M71 321.5l2.500-3 2.500 3zM71 325.5l2.500 3 2.500-3z" stroke="#000" stroke-width="1" fill="#000"/>
<path d="M73.500 331.5v9M71 334.0l2.500-3 2.500 3zM71 338.0l2.500 3 2.500-3z" stroke="#000" stroke-width="1" fill="#000"/>
<path d="M73.500 344.500v9M71 348l2.500-3 2.500 3zM71 350l2.500 3 2.500-3zM71 349h5" stroke="#000" stroke-width="1" fill="#000"/>
</svg>
<!-- scope -->
<div class="abs" style="left:134px;top:62px;width:889px;height:2px;background:#808080"></div>
<div class="abs" style="left:134px;top:63px;width:889px;height:1px;background:#404040"></div>
<div class="abs" style="left:134px;top:62px;width:1px;height:568px;background:#808080"></div>
<div class="abs" style="left:135px;top:63px;width:1px;height:566px;background:#404040"></div>
<svg style="left:136px;top:64px;overflow:hidden" width="870" height="548" viewBox="136 64 870 548">
<rect x="136" y="64" width="870" height="548" fill="#000"/>
<g shape-rendering="crispEdges" fill="none">
<path d="M160.5 68V564M185.5 68V564M210.5 68V564M235.5 68V564M260.5 68V564M285.5 68V564M310.5 68V564M335.5 68V564M360.5 68V564M385.5 68V564M410.5 68V564M435.5 68V564M460.5 68V564M485.5 68V564M510.5 68V564M535.5 68V564M560.5 68V564M585.5 68V564M610.5 68V564M635.5 68V564M660.5 68V564M685.5 68V564M710.5 68V564M735.5 68V564M760.5 68V564M785.5 68V564M810.5 68V564M835.5 68V564M860.5 68V564M885.5 68V564M910.5 68V564M935.5 68V564M960.5 68V564M985.5 68V564" stroke="#989898" stroke-width="1" stroke-dasharray="1 4"/>
<path d="M160 88.5H1006M160 113.5H1006M160 138.5H1006M160 163.5H1006M160 188.5H1006M160 213.5H1006M160 238.5H1006M160 263.5H1006M160 288.5H1006M160 313.5H1006M160 338.5H1006M160 363.5H1006M160 388.5H1006M160 413.5H1006M160 438.5H1006M160 463.5H1006M160 488.5H1006M160 513.5H1006M160 538.5H1006M160 563.5H1006" stroke="#989898" stroke-width="1" stroke-dasharray="1 4"/>
<path d="M136 67.5h1M136 72.5h1M136 77.5h1M136 82.5h1M136 92.5h1M136 97.5h1M136 102.5h1M136 107.5h1M136 117.5h1M136 122.5h1M136 127.5h1M136 132.5h1M136 142.5h1M136 147.5h1M136 152.5h1M136 157.5h1M136 167.5h1M136 172.5h1M136 177.5h1M136 182.5h1M136 192.5h1M136 197.5h1M136 202.5h1M136 207.5h1M136 217.5h1M136 222.5h1M136 227.5h1M136 232.5h1M136 242.5h1M136 247.5h1M136 252.5h1M136 257.5h1M136 267.5h1M136 272.5h1M136 277.5h1M136 282.5h1M136 292.5h1M136 297.5h1M136 302.5h1M136 307.5h1M136 317.5h1M136 322.5h1M136 327.5h1M136 332.5h1M136 342.5h1M136 347.5h1M136 352.5h1M136 357.5h1M136 367.5h1M136 372.5h1M136 377.5h1M136 382.5h1M136 392.5h1M136 397.5h1M136 402.5h1M136 407.5h1M136 417.5h1M136 422.5h1M136 427.5h1M136 432.5h1M136 442.5h1M136 447.5h1M136 452.5h1M136 457.5h1M136 467.5h1M136 472.5h1M136 477.5h1M136 482.5h1M136 492.5h1M136 497.5h1M136 502.5h1M136 507.5h1M136 517.5h1M136 522.5h1M136 527.5h1M136 532.5h1M136 542.5h1M136 547.5h1M136 552.5h1M136 557.5h1" stroke="#989898" stroke-width="1"/>
<path d="M399.500 64V564M575.500 64V564M757.500 64V564" stroke="#c0c000" stroke-width="1"/>
<path d="M160 287.500H1006" stroke="#808000" stroke-width="1"/>
<path d="M160 138.500H1006" stroke="#b0fffa" stroke-width="1"/>
<path d="M179 139.5h1M197 137.5h1M289 137.5h1M382 139.5h1M420 137.5h1M470 139.5h1M538 137.5h1M612 139.5h1M652 137.5h1M705 139.5h1M791 137.5h1M842 139.5h1M905 137.5h1M968 139.5h1" stroke="#b0fffa" stroke-width="1"/>
<path d="M160 438.500H1006" stroke="#ff0000" stroke-width="1"/>
<path d="M160 556.500H1006" stroke="#408000" stroke-width="1"/>
</g>
<path d="M160.2 325.2 160.8 326.6 161.7 328.7 162.7 330.9 163.7 332.6 164.7 333.8 165.8 334.6 167.0 335.2 168.0 335.5 168.9 335.4 169.7 335.0 170.5 334.3 171.5 333.5 172.6 332.4 173.7 331.1 174.9 329.6 176.4 328.3 178.2 327.2 180.2 326.2 182.3 325.1 184.2 323.8 185.8 322.1 187.4 320.1 188.8 318.1 190.0 316.6 191.0 315.5 191.8 314.7 192.5 314.2 193.4 314.0 194.4 314.3 195.5 314.9 196.7 315.8 197.9 316.6 199.1 317.7 200.4 319.1 201.8 320.1 203.1 320.3 204.4 319.2 205.8 317.3 207.2 315.0 208.6 313.0 210.1 311.2 211.6 309.5 213.1 307.8 214.5 306.2 215.8 304.7 217.1 303.2 218.3 301.8 219.3 300.4 220.0 299.2 220.5 298.1 220.9 296.9 221.3 295.5 221.7 294.0 222.0 292.5 222.3 290.5 222.7 287.7 223.2 283.6 223.9 278.5 224.5 273.1 225.2 268.1 225.9 263.7 226.6 259.4 227.3 255.1 228.1 250.5 229.0 245.3 230.0 239.7 231.0 234.1 232.0 229.0 233.0 224.3 234.0 219.7 234.9 215.7 235.9 212.5 236.8 210.2 237.7 208.6 238.6 207.7 239.5 207.2 240.4 207.2 241.2 207.8 242.0 208.9 242.8 210.5 243.5 212.5 244.2 215.0 244.9 218.0 245.7 221.3 246.6 225.4 247.6 230.2 248.6 235.0 249.6 238.8 250.5 241.8 251.3 244.2 252.1 245.8 252.9 246.6 253.7 246.2 254.6 244.9 255.5 242.9 256.4 240.8 257.4 238.3 258.4 235.2 259.4 232.3 260.4 230.0 261.4 228.6 262.4 227.6 263.4 227.2 264.3 227.1 265.1 227.4 265.8 228.0 266.4 229.2 267.2 231.0 268.1 233.6 269.0 236.9 270.0 240.6 271.1 244.7 272.3 249.4 273.6 254.6 274.8 259.8 276.0 264.2 277.0 267.7 278.0 270.5 278.9 272.9 279.9 275.0 280.9 276.8 281.8 278.1 282.8 279.1 283.8 279.5 285.0 279.2 286.2 278.2 287.5 277.0 288.7 276.0 289.7 275.3 290.7 274.5 291.6 274.1 292.6 274.0 293.6 274.4 294.6 275.2 295.6 276.4 296.5 277.9 297.4 279.8 298.2 282.1 299.1 284.7 300.0 287.7 301.0 291.3 302.1 295.5 303.3 299.7 304.3 303.3 305.2 306.3 306.1 308.9 307.0 311.1 307.8 313.0 308.6 314.6 309.4 315.8 310.2 316.7 311.1 317.3 312.2 317.5 313.4 317.3 314.7 316.9 316.0 316.6 317.4 316.4 318.9 316.2 320.4 316.0 321.9 316.0 323.4 316.1 324.8 316.2 326.2 316.5 327.7 317.0 329.2 317.6 330.7 318.3 332.2 319.2 333.6 320.5 334.9 322.3 336.1 324.5 337.3 326.7 338.5 328.7 339.7 330.5 341.0 332.2 342.2 333.6 343.4 334.5 344.4 335.0 345.2 335.1 346.2 334.7 347.6 333.8 349.7 332.0 352.1 329.5 354.8 326.8 357.6 324.4 360.6 322.2 363.8 320.0 366.9 318.0 369.3 316.6 370.7 315.8 371.5 315.4 372.2 315.3 373.2 315.4 374.9 315.8 376.8 316.4 378.8 317.0 380.4 317.3 381.5 317.1 382.2 316.7 382.9 316.0 383.9 315.0 385.2 313.6 386.8 311.9 388.3 310.0 389.8 308.2 391.1 306.5 392.4 304.9 393.6 303.2 394.7 301.3 395.6 299.2 396.3 296.9 397.0 294.6 397.6 292.5 398.1 290.9 398.6 289.7 399.1 288.1 399.6 285.7 400.2 282.2 400.9 277.8 401.7 273.0 402.5 268.1 403.4 263.0 404.4 257.5 405.4 251.9 406.4 246.6 407.4 241.5 408.3 236.4 409.3 231.6 410.3 227.1 411.3 222.9 412.3 218.9 413.3 215.4 414.2 212.5 415.1 210.3 415.9 208.7 416.7 207.6 417.5 207.2 418.3 207.3 419.0 208.0 419.7 209.4 420.5 211.5 421.3 214.6 422.2 218.5 423.1 222.8 424.0 227.1 424.8 231.6 425.7 236.3 426.5 240.9 427.3 244.7 428.0 247.8 428.7 250.4 429.4 252.3 430.2 253.1 431.1 252.7 432.0 251.2 432.9 249.1 433.8 246.6 434.7 243.5 435.5 239.8 436.4 236.0 437.3 233.0 438.3 230.7 439.3 228.9 440.3 227.6 441.2 227.1 442.0 227.3 442.8 228.1 443.6 229.7 444.5 232.0 445.6 235.3 446.8 239.4 448.1 244.0 449.4 248.6 450.8 253.3 452.3 258.2 453.8 263.0 455.2 267.1 456.5 270.5 457.8 273.4 459.0 275.9 460.1 277.9 461.0 279.5 461.8 280.6 462.5 281.2 463.4 281.2 464.5 280.4 465.6 279.0 466.8 277.3 467.9 275.9 468.9 274.8 469.9 273.6 470.9 272.8 471.8 272.6 472.7 273.0 473.5 273.9 474.4 275.2 475.2 276.9 476.1 279.0 476.9 281.5 477.8 284.4 478.7 287.7 479.6 291.8 480.6 296.5 481.6 301.2 482.6 305.2 483.5 308.4 484.3 311.1 485.3 313.3 486.5 315.0 488.2 315.9 490.2 316.1 492.3 316.0 494.3 316.0 496.3 316.3 498.3 316.5 500.3 316.7 502.1 316.6 503.7 316.0 505.1 315.0 506.4 314.2 507.6 314.0 508.7 314.5 509.8 315.6 510.8 317.0 511.9 318.9 513.1 321.5 514.3 324.7 515.6 328.0 516.8 330.6 518.0 332.5 519.1 334.0 520.2 335.1 521.3 335.5 522.4 335.2 523.4 334.2 524.4 332.9 525.5 331.6 526.6 330.2 527.8 328.7 529.1 327.3 530.5 326.3 532.1 326.2 533.9 326.6 535.7 326.9 537.4 326.3 539.1 324.3 540.7 321.4 542.3 318.3 543.7 316.0 544.9 314.5 546.0 313.4 547.0 312.7 548.0 312.5 549.1 312.9 550.2 313.8 551.3 314.9 552.5 316.0 553.7 317.1 554.9 318.4 556.1 319.5 557.3 319.9 558.3 319.6 559.3 318.7 560.3 317.4 561.3 316.0 562.4 314.3 563.6 312.3 564.8 310.2 566.1 308.2 567.6 306.3 569.2 304.4 570.7 302.6 572.0 300.9 572.9 299.5 573.5 298.4 574.0 297.1 574.5 295.5 575.0 293.6 575.4 291.5 575.9 288.9 576.5 285.7 577.2 281.6 578.0 276.7 578.9 271.4 579.8 266.2 580.7 260.9 581.7 255.3 582.7 249.8 583.7 244.7 584.7 239.9 585.7 235.3 586.7 231.0 587.6 227.1 588.5 223.6 589.3 220.3 590.1 217.6 590.9 215.4 591.6 213.9 592.2 213.0 592.8 212.5 593.5 212.5 594.2 212.7 594.9 213.2 595.6 214.4 596.4 216.4 597.2 219.7 598.1 224.0 599.0 228.6 599.9 233.0 600.7 237.2 601.6 241.4 602.4 245.4 603.2 248.6 604.0 251.1 604.7 253.1 605.5 254.4 606.2 255.0 606.9 254.8 607.6 253.9 608.3 252.4 609.1 250.5 610.0 248.0 610.9 244.8 611.9 241.5 613.0 238.8 614.2 236.5 615.5 234.4 616.7 232.8 617.9 232.0 618.9 232.2 619.8 233.1 620.8 234.6 621.8 236.9 623.0 240.0 624.2 244.0 625.5 248.3 626.7 252.5 627.9 256.5 629.2 260.6 630.4 264.5 631.6 268.1 632.7 271.3 633.6 274.2 634.6 276.8 635.5 278.9 636.4 280.6 637.2 281.8 638.1 282.6 639.0 282.8 640.0 282.2 641.1 281.0 642.2 279.5 643.3 277.9 644.5 276.0 645.8 273.8 647.0 271.9 648.2 271.0 649.3 271.5 650.3 272.8 651.2 274.8 652.1 276.9 652.9 279.2 653.6 281.8 654.3 284.7 655.0 287.7 655.7 290.9 656.4 294.4 657.1 298.0 657.9 301.3 658.7 304.6 659.6 307.8 660.4 310.7 661.3 313.0 662.1 314.6 662.8 315.7 663.6 316.3 664.8 316.4 666.5 315.8 668.6 314.5 670.7 313.2 672.6 312.5 674.2 312.7 675.6 313.5 676.9 314.4 678.4 315.0 680.1 315.1 681.9 315.0 683.7 315.0 685.3 315.4 686.7 316.3 687.9 317.6 689.0 319.1 690.2 320.9 691.4 323.2 692.7 325.9 693.9 328.5 695.0 330.6 696.0 332.1 697.0 333.2 697.9 334.0 698.9 334.5 699.8 334.8 700.7 334.8 701.7 334.5 702.9 333.6 704.4 331.8 706.2 329.4 708.0 326.8 709.7 324.8 711.3 323.6 712.7 322.8 714.2 322.1 715.5 321.3 716.7 320.3 717.8 319.2 718.9 318.1 720.0 317.3 721.2 316.7 722.4 316.2 723.7 316.0 724.9 316.0 726.1 316.5 727.4 317.3 728.6 318.3 729.8 318.9 730.9 319.3 732.0 319.7 733.1 319.7 734.3 319.3 735.4 318.2 736.6 316.7 737.9 314.8 739.5 313.0 741.7 311.2 744.4 309.3 747.1 307.3 749.3 305.2 750.9 303.0 752.2 300.8 753.2 298.6 754.2 296.4 755.1 294.5 755.8 292.9 756.4 291.0 757.1 288.6 757.8 285.6 758.5 282.3 759.2 278.4 760.0 274.0 760.9 268.7 761.9 262.7 762.9 256.4 763.9 250.5 764.9 244.9 765.9 239.4 766.9 234.1 767.9 229.1 768.9 224.3 769.9 219.8 770.8 215.7 771.8 212.5 772.8 210.2 773.8 208.8 774.8 207.9 775.7 207.6 776.5 207.7 777.2 208.4 777.9 209.6 778.6 211.5 779.3 214.1 780.0 217.3 780.7 221.0 781.5 225.2 782.4 230.4 783.4 236.3 784.5 242.1 785.4 246.6 786.2 249.6 787.0 251.5 787.7 252.7 788.4 253.1 789.1 252.8 789.8 251.7 790.5 249.9 791.3 247.6 792.2 244.4 793.2 240.4 794.2 236.3 795.2 233.0 796.3 230.5 797.4 228.3 798.5 226.8 799.5 226.1 800.4 226.2 801.2 227.0 802.0 228.6 803.0 231.0 804.1 234.6 805.4 239.2 806.6 244.1 807.9 248.6 809.1 252.6 810.3 256.4 811.6 260.0 812.8 263.2 814.0 265.9 815.3 268.3 816.5 270.3 817.7 272.0 818.7 273.4 819.7 274.4 820.6 275.1 821.6 275.5 822.6 275.5 823.5 275.2 824.5 274.7 825.5 274.0 826.5 273.0 827.6 271.6 828.7 270.4 829.8 270.1 830.9 270.7 832.1 272.0 833.3 273.8 834.3 275.9 835.1 278.3 835.8 281.2 836.4 284.3 837.2 287.7 838.1 291.5 839.1 295.7 840.1 299.7 841.1 303.3 842.1 306.4 843.0 309.1 844.0 311.3 845.0 312.7 846.2 313.0 847.4 312.4 848.7 311.5 849.9 310.7 851.0 310.1 852.1 309.3 853.2 308.8 854.4 308.6 855.6 309.0 856.9 309.8 858.2 310.7 859.6 311.5 861.2 312.0 863.0 312.4 864.8 312.9 866.5 314.0 868.0 315.8 869.5 318.1 870.9 320.5 872.3 322.8 873.6 324.9 874.9 327.1 876.1 329.0 877.2 330.6 878.1 331.8 878.9 332.7 879.6 333.2 880.5 333.2 881.5 332.4 882.7 330.9 883.8 329.2 885.0 327.7 886.1 326.5 887.3 325.3 888.5 324.2 889.9 323.4 891.5 323.0 893.4 322.9 895.2 322.8 896.8 322.4 898.2 321.5 899.4 320.4 900.5 319.1 901.6 317.9 902.7 316.6 903.8 315.1 904.8 313.9 905.9 313.4 907.0 313.9 908.2 315.2 909.3 316.7 910.4 317.9 911.5 318.9 912.5 319.8 913.5 320.5 914.5 320.9 915.5 321.0 916.4 320.8 917.5 320.2 918.7 318.9 920.2 316.5 921.9 313.3 923.7 309.9 925.6 307.2 927.6 305.3 929.7 303.9 931.7 302.7 933.4 301.3 934.7 299.7 935.7 298.1 936.5 296.4 937.3 294.5 938.0 292.7 938.5 290.9 939.0 288.7 939.6 285.7 940.4 281.6 941.3 276.7 942.2 271.5 943.1 266.2 944.0 260.9 945.0 255.4 946.0 250.0 947.0 244.7 948.0 239.6 949.0 234.5 950.0 229.7 951.0 225.2 952.0 220.9 953.0 216.9 954.0 213.3 954.9 210.5 955.8 208.5 956.7 207.2 957.5 206.4 958.4 206.2 959.2 206.5 960.1 207.3 960.9 208.7 961.7 210.5 962.4 212.8 963.1 215.6 963.8 218.8 964.6 222.2 965.4 226.1 966.4 230.4 967.3 234.6 968.1 237.9 968.8 240.3 969.5 242.0 970.2 243.0 970.9 243.3 971.7 242.6 972.6 241.1 973.5 239.1 974.4 236.9 975.4 234.3 976.4 231.3 977.3 228.4 978.3 226.1 979.2 224.5 980.1 223.4 980.9 222.7 981.8 222.6 982.6 222.9 983.4 223.8 984.2 225.1 985.1 227.1 986.0 229.8 987.0 233.1 987.9 236.9 989.0 240.8 990.2 245.1 991.4 249.7 992.7 254.3 993.9 258.4 995.1 261.9 996.4 265.1 997.6 267.9 998.8 270.1 999.9 271.8 1000.9 272.9 1001.8 273.6 1002.7 274.0 1003.6 273.9 1004.4 273.4 1005.1 272.8 1005.6 272.4" fill="none" stroke="#ffff00" stroke-width="1" stroke-linejoin="round" shape-rendering="crispEdges"/>
<path d="M160.0 553.4 162.2 545.0 165.3 568.0 168.1 545.0 171.2 568.0 174.1 545.0 177.1 568.0 180.0 545.0 183.0 568.0 185.9 545.0 189.0 568.0 191.8 545.0 194.9 568.0 197.7 545.0 200.8 568.0 203.6 545.0 206.7 568.0 209.6 545.0 212.6 568.0 215.5 545.0 218.5 568.0 221.4 545.0 224.4 568.0 227.3 545.0 230.4 568.0 233.2 545.0 236.3 568.0 239.1 545.0 242.2 568.0 245.1 545.0 248.1 568.0 251.0 545.0 254.0 568.0 256.9 545.0 259.9 568.0 262.8 545.0 265.9 568.0 268.7 545.0 271.8 568.0 274.6 545.0 277.7 568.0 280.6 545.0 283.6 568.0 286.5 545.0 289.5 568.0 292.4 545.0 295.4 568.0 298.3 545.0 301.4 568.0 304.2 545.0 307.3 568.0 310.1 545.0 313.2 568.0 316.0 545.0 319.1 568.0 322.0 545.0 325.0 568.0 327.9 545.0 330.9 568.0 333.8 545.0 336.9 568.0 339.7 545.0 342.8 568.0 345.6 545.0 348.7 568.0 351.5 545.0 354.6 568.0 357.5 545.0 360.5 568.0 363.4 545.0 366.4 568.0 369.3 545.0 372.4 568.0 375.2 545.0 378.3 569.8 381.1 545.0 384.2 569.8 387.0 545.0 390.1 569.8 393.0 545.0 396.0 569.8 398.9 545.0 401.9 569.8 404.8 545.0 407.8 569.8 410.7 545.0 413.8 569.8 416.6 545.0 419.7 569.8 422.5 545.0 425.6 569.8 428.5 545.0 431.5 569.8 434.4 545.0 437.4 569.8 440.3 545.0 443.3 569.8 446.2 545.0 449.3 572.5 450.8 565.0 452.2 560.3 455.2 557.3 459.0 555.9 460.8 553.5 461.8 550.0 463.5 538.3 464.6 549.0 465.4 558.3 466.7 566.0 469.5 545.0 472.5 568.0 475.4 545.0 478.4 568.0 481.3 545.0 484.3 568.0 487.2 545.0 490.2 568.0 493.1 545.0 496.1 568.0 499.0 545.0 502.0 568.0 504.9 545.0 507.9 568.0 510.8 545.0 513.8 568.0 516.7 545.0 519.7 568.0 522.6 545.0 525.6 568.0 528.5 545.0 531.5 568.0 534.4 545.0 537.4 568.0 540.3 545.0 543.3 568.0 546.2 545.0 549.2 568.0 552.1 545.0 555.1 568.0 557.9 545.0 561.0 568.0 563.8 545.0 566.9 568.0 569.7 545.0 572.8 568.0 575.6 545.0 578.7 568.0 581.5 545.0 584.6 568.0 587.4 545.0 590.5 568.0 593.3 545.0 596.4 568.0 599.2 545.0 602.3 568.0 605.1 545.0 608.2 568.0 611.0 545.0 614.1 568.0 616.9 545.0 620.0 568.0 622.8 545.0 625.9 568.0 628.7 545.0 631.8 568.0 634.6 545.0 637.6 568.0 640.5 545.0 643.5 568.0 646.4 545.0 649.4 568.0 652.3 545.0 655.3 568.0 658.2 545.0 661.2 568.0 664.1 545.0 667.1 568.0 670.0 545.0 673.0 568.0 675.9 545.0 678.9 568.0 681.8 545.0 684.8 568.0 687.7 545.0 690.7 568.0 693.6 545.0 696.6 568.0 699.5 545.0 702.5 568.0 705.4 545.0 708.4 568.0 711.3 545.0 714.3 568.0 717.2 545.0 720.2 568.0 723.0 545.0 726.1 568.0 728.9 545.0 732.0 568.0 734.8 545.0 737.9 568.0 740.7 545.0 743.8 568.0 746.6 545.0 749.7 568.0 752.5 545.0 755.6 568.0 758.4 545.0 761.5 568.0 764.3 545.0 767.4 568.0 770.2 545.0 773.3 568.0 776.1 545.0 779.2 568.0 782.0 545.0 785.1 568.0 787.9 545.0 791.0 568.0 793.8 545.0 796.9 568.0 799.7 545.0 802.8 568.0 805.6 545.0 807.6 568.0 809.3 571.5 810.8 565.0 812.2 560.3 815.2 557.3 819.0 555.9 820.8 553.5 821.8 550.0 823.5 539.3 824.6 549.0 825.4 558.3 827.2 566.0 829.8 545.0 832.9 568.0 835.7 545.0 838.8 568.0 841.7 545.0 844.7 568.0 847.6 545.0 850.7 568.0 853.5 545.0 856.6 568.0 859.4 545.0 862.5 568.0 865.4 545.0 868.4 568.0 871.3 545.0 874.4 568.0 877.2 545.0 880.3 568.0 883.2 545.0 886.2 568.0 889.1 545.0 892.2 568.0 895.0 545.0 898.1 568.0 901.0 545.0 904.0 568.0 906.9 545.0 910.0 568.0 912.8 545.0 915.9 568.0 918.8 545.0 921.8 568.0 924.7 545.0 927.7 568.0 930.6 545.0 933.7 568.0 936.5 545.0 939.6 568.0 942.5 545.0 945.5 568.0 948.4 545.0 951.5 568.0 954.3 545.0 957.4 568.0 960.3 545.0 963.3 568.0 966.2 545.0 969.3 568.0 972.1 545.0 975.2 568.0 978.0 545.0 981.1 568.0 984.0 545.0 987.0 568.0 989.9 545.0 993.0 568.0 995.8 545.0 998.9 568.0 1001.8 545.0 1004.8 568.0" fill="none" stroke="#80ff00" stroke-width="1" stroke-linejoin="round" shape-rendering="crispEdges"/>
<g shape-rendering="crispEdges" fill="none">
<path d="M210.5 438V405M211.5 405V371M212.5 390V424M213.5 423V438M214 437.500h2" stroke="#ff0000" stroke-width="1"/>
<path d="M930.5 438V405M931.5 405V371M932.5 390V424M933.5 423V438M934 437.500h2" stroke="#ff0000" stroke-width="1"/>
<path d="M203.5 64V588M239.5 64V588M380.5 64V588M417.5 64V588M557.5 64V588M593.5 64V588M734.5 64V588M775.5 64V588" stroke="#00ffff" stroke-width="1"/>
<rect x="196.5" y="588.500" width="13" height="13" stroke="#00ffff" stroke-width="1" fill="#000"/>
<rect x="232.5" y="588.500" width="13" height="13" stroke="#00ffff" stroke-width="1" fill="#000"/>
<rect x="373.5" y="588.500" width="13" height="13" stroke="#00ffff" stroke-width="1" fill="#000"/>
<rect x="410.5" y="588.500" width="13" height="13" stroke="#00ffff" stroke-width="1" fill="#000"/>
<rect x="550.5" y="588.500" width="13" height="13" stroke="#00ffff" stroke-width="1" fill="#000"/>
<rect x="586.5" y="588.500" width="13" height="13" stroke="#00ffff" stroke-width="1" fill="#000"/>
<rect x="727.5" y="588.500" width="13" height="13" stroke="#00ffff" stroke-width="1" fill="#000"/>
<rect x="768.5" y="588.500" width="13" height="13" stroke="#00ffff" stroke-width="1" fill="#000"/>
<path d="M203 138.5h1M239 138.5h1M380 138.5h1M417 138.5h1M557 138.5h1M593 138.5h1M734 138.5h1M775 138.5h1" stroke="#c00000" stroke-width="1"/>
<path d="M221.500 64V564M939.500 64V564" stroke="#0000c0" stroke-width="1"/>
<path d="M221.500 564V588M939.500 564V588" stroke="#b8b8b8" stroke-width="1"/>
<rect x="216.500" y="599.500" width="11" height="11" stroke="#b8b8b8" fill="#000"/>
<rect x="934.500" y="587.500" width="11" height="11" stroke="#b8b8b8" fill="#000"/>
</g>
<g font-family="Liberation Sans,sans-serif">
<text x="203.5" y="599.500" font-size="12.500" font-weight="bold" fill="#00ffff" stroke="#00ffff" stroke-width="0.400" text-anchor="middle">0</text>
<text x="239.5" y="599.500" font-size="12.500" font-weight="bold" fill="#00ffff" stroke="#00ffff" stroke-width="0.400" text-anchor="middle">1</text>
<text x="380.5" y="599.500" font-size="12.500" font-weight="bold" fill="#00ffff" stroke="#00ffff" stroke-width="0.400" text-anchor="middle">2</text>
<text x="417.5" y="599.500" font-size="12.500" font-weight="bold" fill="#00ffff" stroke="#00ffff" stroke-width="0.400" text-anchor="middle">3</text>
<text x="557.5" y="599.500" font-size="12.500" font-weight="bold" fill="#00ffff" stroke="#00ffff" stroke-width="0.400" text-anchor="middle">4</text>
<text x="593.5" y="599.500" font-size="12.500" font-weight="bold" fill="#00ffff" stroke="#00ffff" stroke-width="0.400" text-anchor="middle">5</text>
<text x="734.5" y="599.500" font-size="12.500" font-weight="bold" fill="#00ffff" stroke="#00ffff" stroke-width="0.400" text-anchor="middle">6</text>
<text x="775.5" y="599.500" font-size="12.500" font-weight="bold" fill="#00ffff" stroke="#00ffff" stroke-width="0.400" text-anchor="middle">7</text>
<text x="222.500" y="609.500" font-size="11" font-weight="bold" fill="#c8c8c8" text-anchor="middle">A</text>
<text x="940.500" y="597.500" font-size="11" font-weight="bold" fill="#c8c8c8" text-anchor="middle">B</text>
<text x="208.500" y="609" font-size="14" fill="#d8d800" stroke="#d8d800" stroke-width="0.120" textLength="11.500" lengthAdjust="spacingAndGlyphs">0°</text>
<text x="386.500" y="609" font-size="14" fill="#d8d800" stroke="#d8d800" stroke-width="0.120" textLength="25.500" lengthAdjust="spacingAndGlyphs">178°</text>
<text x="561.500" y="609" font-size="14" fill="#d8d800" stroke="#d8d800" stroke-width="0.120" textLength="25.500" lengthAdjust="spacingAndGlyphs">355°</text>
<text x="743.500" y="609" font-size="14" fill="#d8d800" stroke="#d8d800" stroke-width="0.120" textLength="26" lengthAdjust="spacingAndGlyphs">537°</text>
<text x="925.500" y="609" font-size="14" fill="#d8d800" stroke="#d8d800" stroke-width="0.120" textLength="26.500" lengthAdjust="spacingAndGlyphs">720°</text>
<text x="138.500" y="142.8" font-size="14" font-weight="bold" fill="#b0fffa" textLength="7" lengthAdjust="spacingAndGlyphs">1</text>
<path d="M146 138.5h11" stroke="#b0fffa" stroke-width="1" shape-rendering="crispEdges"/><path d="M149 134.5l6.500 4-6.500 4z" fill="#b0fffa"/>
<text x="138.500" y="291.8" font-size="14" font-weight="bold" fill="#ffff00" textLength="7" lengthAdjust="spacingAndGlyphs">2</text>
<path d="M146 287.5h11" stroke="#ffff00" stroke-width="1" shape-rendering="crispEdges"/><path d="M149 283.5l6.500 4-6.500 4z" fill="#ffff00"/>
<text x="138.500" y="442.8" font-size="14" font-weight="bold" fill="#ff0000" textLength="7" lengthAdjust="spacingAndGlyphs">3</text>
<path d="M146 438.5h11" stroke="#ff0000" stroke-width="1" shape-rendering="crispEdges"/><path d="M149 434.5l6.500 4-6.500 4z" fill="#ff0000"/>
<text x="138.500" y="560.8" font-size="14" font-weight="bold" fill="#80ff00" textLength="7" lengthAdjust="spacingAndGlyphs">4</text>
<path d="M146 556.5h11" stroke="#80ff00" stroke-width="1" shape-rendering="crispEdges"/><path d="M149 552.5l6.500 4-6.500 4z" fill="#80ff00"/>
</g>
</svg>
<div class="abs chk" style="left:1006px;top:64px;width:16px;height:548px"></div>
<div class="raised2" style="left:1006px;top:64px;width:16px;height:16px"></div>
<div class="raised2" style="left:1006px;top:596px;width:16px;height:16px"></div>
<div class="raised2" style="left:1006px;top:338px;width:16px;height:9px"></div>
<div class="abs" style="left:1022px;top:64px;width:1px;height:565px;background:#d4d0c8"></div>
<div class="abs" style="left:1023px;top:62px;width:1px;height:567px;background:#fff"></div>
<div class="abs chk" style="left:136px;top:612px;width:870px;height:16px"></div>
<div class="raised2" style="left:136px;top:612px;width:16px;height:16px"></div>
<div class="raised2" style="left:990px;top:612px;width:16px;height:16px"></div>
<div class="raised2" style="left:480px;top:612px;width:195px;height:16px"></div>
<div class="abs" style="left:1006px;top:612px;width:16px;height:16px;background:#d4d0c8"></div>
<svg style="left:0;top:0" width="1024" height="640" viewBox="0 0 1024 640"><path d="M1010.500 73.500h7l-3.500-4zM1010.500 602.500h7l-3.500 4zM145.500 616.500v7l-4-3.500zM996.500 616.500v7l4-3.500z" fill="#000"/></svg>
<div class="abs" style="left:134px;top:628px;width:890px;height:1px;background:#fff"></div>
<!-- bottom panel -->
<div class="abs" style="left:0;top:628px;width:1024px;height:1px;background:#808080"></div>
<div class="abs" style="left:0;top:629px;width:1024px;height:1px;background:#fff"></div>
<div class="raised" style="left:2px;top:632px;width:14px;height:14px"></div>
<div class="raised" style="left:2px;top:646px;width:14px;height:14px"></div>
<svg style="left:0;top:628px" width="20" height="40" viewBox="0 628 20 40"><path d="M5.500 636l6 6M11.500 636l-6 6" stroke="#000" stroke-width="1.800"/><text x="9" y="657.500" font-family="Liberation Sans,sans-serif" font-size="11" font-weight="bold" text-anchor="middle" fill="#000">?</text></svg>
<div class="abs" style="left:3px;top:662px;width:5px;height:56px;border:1px solid;border-color:#fff #808080 #808080 #fff;border-right-width:2px"></div>
<div class="abs" style="left:11px;top:662px;width:5px;height:56px;border:1px solid;border-color:#fff #808080 #808080 #fff;border-right-width:2px"></div>
<div class="t" style="left:26px;top:671px;font-family:'Liberation Serif',serif;font-size:16px;letter-spacing:-0.280px">Цилиндры:</div>
<div class="sunken2" style="left:102px;top:669px;width:40px;height:22px;background:#fff"></div>
<div class="raised2" style="left:124px;top:671px;width:16px;height:18px"></div>
<svg style="left:124px;top:671px" width="16" height="18"><path d="M4.500 7.500h7l-3.500 4z" fill="#000"/></svg>
<div class="t" style="left:115px;top:673.500px;font-size:12.500px">4</div>
<div class="raised" style="left:143px;top:668px;width:120px;height:24px"></div>
<div class="t" style="left:143px;top:673px;width:120px;text-align:center;font-size:13px;letter-spacing:0.100px">Уст. маркеры</div>
<div class="t" style="left:274px;top:646px;font-size:12px;letter-spacing:-0.050px">Int. Op:</div>
<div class="gf" style="left:321px;top:643px;width:70px;height:17px;font-size:12px;line-height:17px">18.1°</div>
<div class="gf" style="left:392px;top:643px;width:70px;height:17px;font-size:12px;line-height:17px">18.6°</div>
<div class="gf" style="left:463px;top:643px;width:70px;height:17px;font-size:12px;line-height:17px">18.1°</div>
<div class="gf" style="left:534px;top:643px;width:70px;height:17px;font-size:12px;line-height:17px">22.6°</div>
<div class="t" style="left:274px;top:664px;font-size:12px;letter-spacing:-0.050px">Ex. Cl:</div>
<div class="gf" style="left:321px;top:661px;width:70px;height:17px;font-size:12px;line-height:17px">18.1°</div>
<div class="gf" style="left:392px;top:661px;width:70px;height:17px;font-size:12px;line-height:17px">18.6°</div>
<div class="gf" style="left:463px;top:661px;width:70px;height:17px;font-size:12px;line-height:17px">18.1°</div>
<div class="gf" style="left:534px;top:661px;width:70px;height:17px;font-size:12px;line-height:17px">18.6°</div>
<div class="t" style="left:274px;top:682px;font-size:12px;letter-spacing:-0.050px">ΔPhase:</div>
<div class="gf" style="left:321px;top:679px;width:70px;height:17px;font-size:12px;line-height:17px">36.1°</div>
<div class="gf" style="left:392px;top:679px;width:70px;height:17px;font-size:12px;line-height:17px">37.1°</div>
<div class="gf" style="left:463px;top:679px;width:70px;height:17px;font-size:12px;line-height:17px">36.1°</div>
<div class="gf" style="left:534px;top:679px;width:70px;height:17px;font-size:12px;line-height:17px">41.1°</div>
<div class="raised" style="left:394px;top:698px;width:33px;height:17px"></div>
<div class="t" style="left:394px;top:700px;width:33px;text-align:center;font-size:11px">&lt;</div>
<div class="raised" style="left:428px;top:698px;width:33px;height:17px"></div>
<div class="t" style="left:428px;top:700px;width:33px;text-align:center;font-size:11px">&gt;</div>
<div class="raised" style="left:465px;top:698px;width:33px;height:17px"></div>
<div class="t" style="left:465px;top:700px;width:33px;text-align:center;font-size:11px">&lt;</div>
<div class="raised" style="left:499px;top:698px;width:33px;height:17px"></div>
<div class="t" style="left:499px;top:700px;width:33px;text-align:center;font-size:11px">&gt;</div>
<div class="raised" style="left:536px;top:698px;width:33px;height:17px"></div>
<div class="t" style="left:536px;top:700px;width:33px;text-align:center;font-size:11px">&lt;</div>
<div class="raised" style="left:570px;top:698px;width:33px;height:17px"></div>
<div class="t" style="left:570px;top:700px;width:33px;text-align:center;font-size:11px">&gt;</div>
<div class="abs" style="left:0;top:718px;width:1024px;height:1px;background:#808080"></div>
<div class="abs" style="left:0;top:719px;width:1024px;height:1px;background:#fff"></div>
<div class="sunken" style="left:662px;top:723px;width:320px;height:15px"></div>
<div class="t" style="left:664px;top:725px;font-size:11px;letter-spacing:0.080px">Полн. время: 00:00:00:543.220, Тек. время: 00:00:00:293.000</div>
<div class="sunken" style="left:984px;top:723px;width:40px;height:15px"></div>
<div class="t" style="left:986px;top:725px;font-size:11px">1.75</div>
<div class="abs" style="left:0;top:739px;width:1024px;height:1px;background:#fff"></div>
<div class="raised" style="left:2px;top:742px;width:51px;height:22px"></div>
<svg style="left:5px;top:744px" width="17" height="17" viewBox="0 0 17 17"><path d="M2 3c2-1.500 4-1.500 6 0l-1 5c-2-1.500-4-1.500-6 0z" fill="#e04020"/><path d="M9 3.500c2 1.500 4 1.500 6 0l-1 5c-2 1.500-4 1.500-6 0z" fill="#40a030"/><path d="M0.800 9c2-1.500 4-1.500 6 0l-1 5c-2-1.500-4-1.500-6 0z" fill="#3060d0"/><path d="M7.800 9.500c2 1.500 4 1.500 6 0l-1 5c-2 1.500-4 1.500-6 0z" fill="#f0c020"/></svg>
<div class="t" style="left:21.500px;top:747px;font-size:12px;font-weight:bold">Пуск</div>
<div class="raised" style="left:58px;top:742px;width:160px;height:22px"></div>
<svg style="left:62px;top:745px" width="16" height="16" viewBox="0 0 16 16"><path d="M3 1.500h5l1.500 1.500v11.500h-6.500z" fill="#f0d878" stroke="#c0a040" stroke-width="0.800"/><path d="M9.500 3l3 0.500v10l-3 1z" fill="#e8c860" stroke="#c0a040" stroke-width="0.600"/><rect x="10" y="8" width="1.500" height="3" fill="#60a0e0"/></svg>
<div class="t" style="left:81px;top:747px;font-size:11px;letter-spacing:0.050px">C:\Documents and Settin...</div>
<div class="abs chk" style="left:221px;top:742px;width:160px;height:22px;border:1px solid;border-color:#404040 #fff #fff #404040;box-shadow:inset 1px 1px 0 #808080"></div>
<svg style="left:225px;top:746px" width="16" height="16" viewBox="0 0 16 16" shape-rendering="crispEdges"> <rect x="0" y="0" width="16" height="16" fill="#c8c8c8"/><rect x="1" y="1" width="15" height="15" fill="#000"/> <rect x="2" y="2" width="13" height="13" fill="#c0c0c0"/><rect x="2" y="2" width="12" height="12" fill="#008000"/> <path d="M2.500 6.500h1v-2h1v-1h2v1h1v2h2v-2h1v-1h2v1h1v2h1" fill="none" stroke="#00ff00"/><path d="M3 13V11h1V9h1v2h1V10h1V8h1v3h1V10h1V8h1v3h1V9h1v4z" fill="#00ff00"/></svg>
<div class="t" style="left:245px;top:748px;font-size:12px;font-weight:bold;letter-spacing:-0.100px">USB Осциллограф - С...</div>
<div class="abs" style="left:920px;top:746px;width:16px;height:16px;background:#0a246a"></div>
<svg style="left:920px;top:746px" width="16" height="16"><text x="1.400" y="12" font-family="Liberation Sans,sans-serif" font-size="11" fill="#fff" textLength="13.300" lengthAdjust="spacingAndGlyphs">RU</text></svg>
<div class="abs" style="left:940px;top:742px;width:1px;height:22px;background:#808080"></div><div class="abs" style="left:941px;top:742px;width:1px;height:22px;background:#fff"></div>
<div class="sunken" style="left:945px;top:742px;width:77px;height:22px"></div>
<div class="t" style="left:949.500px;top:745px;font-size:15px;font-weight:bold">«</div>
<svg style="left:962px;top:746px" width="18" height="18" viewBox="0 0 18 18"><rect x="6" y="1" width="10" height="8" fill="#707070" stroke="#404040"/><rect x="7.500" y="2.500" width="7" height="5" fill="#909090"/><rect x="1" y="4" width="10" height="8" fill="#808080" stroke="#404040"/><rect x="2.500" y="5.500" width="7" height="5" fill="#a0a0a0"/><rect x="4" y="12.500" width="4" height="1.500" fill="#606060"/><rect x="2.500" y="14" width="7" height="1.200" fill="#707070"/></svg>
<div class="t" style="left:986px;top:749px;font-size:11px;letter-spacing:0.100px">13:40</div>
</body></html>
